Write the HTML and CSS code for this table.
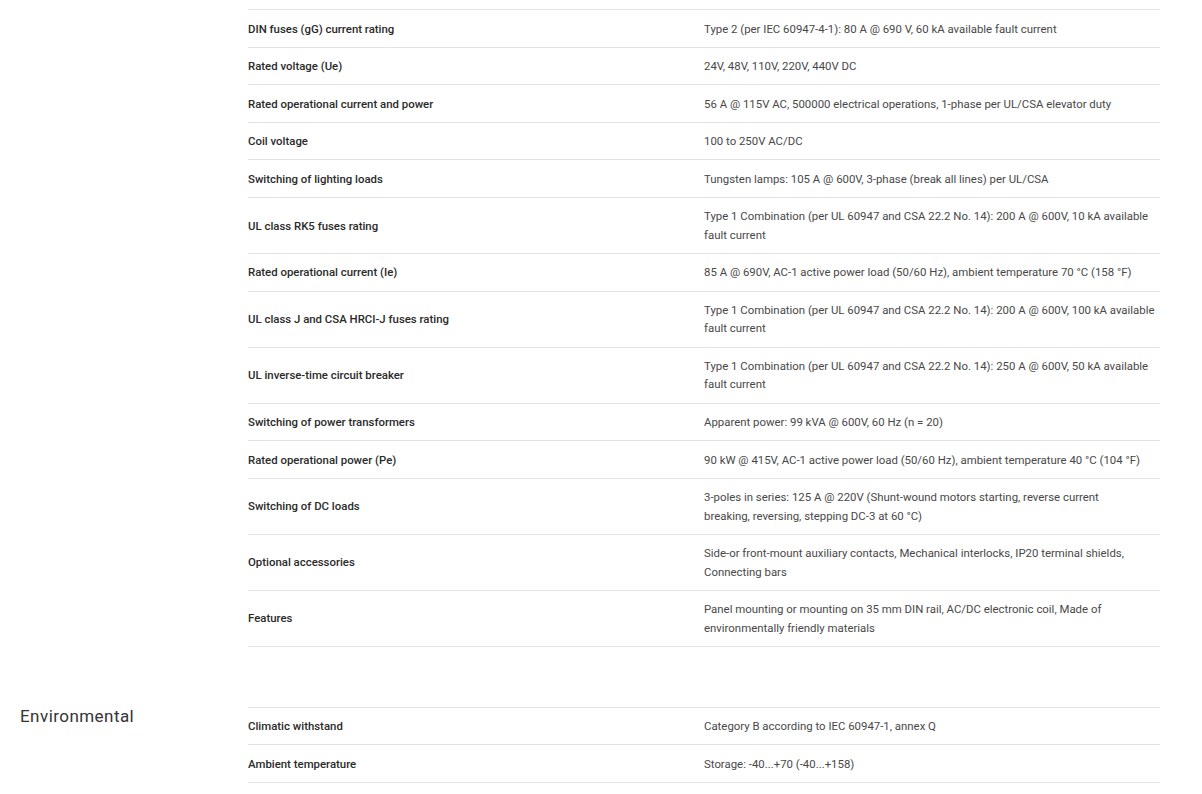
FILE: index.html
```html
<!DOCTYPE html>
<html lang="en">
<head>
<meta charset="utf-8">
<title>Specifications</title>
<link rel="stylesheet" href="styles.css">
</head>
<body>
<div class="page">
  <section class="group group-first">
    <div class="group-title"></div>
    <div class="spec-table">
      <div class="row"><div class="label">DIN fuses (gG) current rating</div><div class="value">Type 2 (per IEC 60947-4-1): 80 A @ 690 V, 60 kA available fault current</div></div>
      <div class="row"><div class="label">Rated voltage (Ue)</div><div class="value">24V, 48V, 110V, 220V, 440V DC</div></div>
      <div class="row"><div class="label">Rated operational current and power</div><div class="value">56 A @ 115V AC, 500000 electrical operations, 1-phase per UL/CSA elevator duty</div></div>
      <div class="row"><div class="label">Coil voltage</div><div class="value">100 to 250V AC/DC</div></div>
      <div class="row"><div class="label">Switching of lighting loads</div><div class="value">Tungsten lamps: 105 A @ 600V, 3-phase (break all lines) per UL/CSA</div></div>
      <div class="row"><div class="label">UL class RK5 fuses rating</div><div class="value">Type 1 Combination (per UL 60947 and CSA 22.2 No. 14): 200 A @ 600V, 10 kA available fault current</div></div>
      <div class="row"><div class="label">Rated operational current (Ie)</div><div class="value">85 A @ 690V, AC-1 active power load (50/60 Hz), ambient temperature 70 °C (158 °F)</div></div>
      <div class="row"><div class="label">UL class J and CSA HRCI-J fuses rating</div><div class="value">Type 1 Combination (per UL 60947 and CSA 22.2 No. 14): 200 A @ 600V, 100 kA available fault current</div></div>
      <div class="row"><div class="label">UL inverse-time circuit breaker</div><div class="value">Type 1 Combination (per UL 60947 and CSA 22.2 No. 14): 250 A @ 600V, 50 kA available fault current</div></div>
      <div class="row"><div class="label">Switching of power transformers</div><div class="value">Apparent power: 99 kVA @ 600V, 60 Hz (n = 20)</div></div>
      <div class="row"><div class="label">Rated operational power (Pe)</div><div class="value">90 kW @ 415V, AC-1 active power load (50/60 Hz), ambient temperature 40 °C (104 °F)</div></div>
      <div class="row"><div class="label">Switching of DC loads</div><div class="value">3-poles in series: 125 A @ 220V (Shunt-wound motors starting, reverse current<br>breaking, reversing, stepping DC-3 at 60 °C)</div></div>
      <div class="row"><div class="label">Optional accessories</div><div class="value">Side-or front-mount auxiliary contacts, Mechanical interlocks, IP20 terminal shields, Connecting bars</div></div>
      <div class="row"><div class="label">Features</div><div class="value">Panel mounting or mounting on 35 mm DIN rail, AC/DC electronic coil, Made of environmentally friendly materials</div></div>
    </div>
  </section>
  <section class="group">
    <h2 class="group-title">Environmental</h2>
    <div class="spec-table">
      <div class="row"><div class="label">Climatic withstand</div><div class="value">Category B according to IEC 60947-1, annex Q</div></div>
      <div class="row"><div class="label">Ambient temperature</div><div class="value">Storage: -40...+70 (-40...+158)</div></div>
    </div>
  </section>
</div>
</body>
</html>
```

FILE: styles.css
```css
* { box-sizing: border-box; }
html, body { margin: 0; padding: 0; background: #fff; }
body {
  font-family: Roboto, "Liberation Sans", Arial, sans-serif;
  color: #464646;
  -webkit-font-smoothing: antialiased;
}
.page {
  padding: 9px 42px 0 0;
}
.group {
  display: grid;
  grid-template-columns: 248px 1fr;
}
.group + .group {
  margin-top: 60px;
}
.group-title {
  margin: 0;
  padding: 0 0 0 20px;
  font-size: 17px;
  font-weight: 400;
  line-height: 19px;
  color: #333;
  letter-spacing: 0.45px;
}
.spec-table {
  border-top: 1px solid #e3e3e3;
}
.row {
  display: grid;
  grid-template-columns: 1fr 1fr;
  border-bottom: 1px solid #e3e3e3;
  padding: 9.5px 0 8.7px;
  font-size: 11.4px;
  line-height: 18.4px;
}
.label {
  font-weight: 500;
  color: #2a2a2a;
  align-self: center;
}
.value {
  color: #484848;
}
```
